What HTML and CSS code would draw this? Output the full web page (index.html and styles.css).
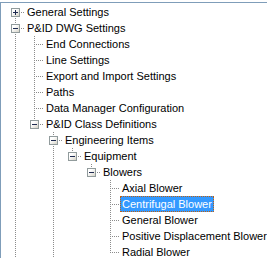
FILE: index.html
```html
<!DOCTYPE html>
<html lang="en">
<head>
    <meta charset="UTF-8">
    <title>Settings Tree</title>
    <link rel="stylesheet" href="styles.css">
</head>
<body>

    <div class="tree">
        <!-- root level -->
        <div class="row">
            <span class="cell first"><span class="box plus"></span></span>
            <span class="label">General Settings</span>
        </div>
        <div class="row">
            <span class="cell tee"><span class="box minus"></span></span>
            <span class="label">P&amp;ID DWG Settings</span>
        </div>

        <!-- P&ID DWG Settings children -->
        <div class="row">
            <span class="cell v"></span><span class="cell tee"></span>
            <span class="label">End Connections</span>
        </div>
        <div class="row">
            <span class="cell v"></span><span class="cell tee"></span>
            <span class="label">Line Settings</span>
        </div>
        <div class="row">
            <span class="cell v"></span><span class="cell tee"></span>
            <span class="label">Export and Import Settings</span>
        </div>
        <div class="row">
            <span class="cell v"></span><span class="cell tee"></span>
            <span class="label">Paths</span>
        </div>
        <div class="row">
            <span class="cell v"></span><span class="cell tee"></span>
            <span class="label">Data Manager Configuration</span>
        </div>
        <div class="row">
            <span class="cell v"></span><span class="cell elbow"><span class="box minus"></span></span>
            <span class="label">P&amp;ID Class Definitions</span>
        </div>

        <div class="row">
            <span class="cell v"></span><span class="cell"></span>
            <span class="cell tee"><span class="box minus"></span></span>
            <span class="label">Engineering Items</span>
        </div>
        <div class="row">
            <span class="cell v"></span><span class="cell"></span><span class="cell v"></span>
            <span class="cell elbow"><span class="box minus"></span></span>
            <span class="label">Equipment</span>
        </div>
        <div class="row">
            <span class="cell v"></span><span class="cell"></span><span class="cell v"></span><span class="cell"></span>
            <span class="cell elbow"><span class="box minus"></span></span>
            <span class="label">Blowers</span>
        </div>

        <!-- Blowers children -->
        <div class="row">
            <span class="cell v"></span><span class="cell"></span><span class="cell v"></span><span class="cell"></span><span class="cell"></span>
            <span class="cell tee"></span>
            <span class="label">Axial Blower</span>
        </div>
        <div class="row">
            <span class="cell v"></span><span class="cell"></span><span class="cell v"></span><span class="cell"></span><span class="cell"></span>
            <span class="cell tee"></span>
            <span class="label selected">Centrifugal Blower</span>
        </div>
        <div class="row">
            <span class="cell v"></span><span class="cell"></span><span class="cell v"></span><span class="cell"></span><span class="cell"></span>
            <span class="cell tee"></span>
            <span class="label">General Blower</span>
        </div>
        <div class="row">
            <span class="cell v"></span><span class="cell"></span><span class="cell v"></span><span class="cell"></span><span class="cell"></span>
            <span class="cell tee"></span>
            <span class="label">Positive Displacement Blower</span>
        </div>
        <div class="row">
            <span class="cell v"></span><span class="cell"></span><span class="cell v"></span><span class="cell"></span><span class="cell"></span>
            <span class="cell elbow"></span>
            <span class="label">Radial Blower</span>
        </div>
    </div>

</body>
</html>
```

FILE: styles.css
```css
body {
    margin: 0;
    background-color: #ffffff;
    font-family: "Liberation Sans", Arial, sans-serif;
    font-size: 11px;
    color: #000000;
    overflow: hidden;
    height: 258px;
}

.tree {
    margin-top: 2px;
    border-top: 1px solid #7f9db9;
    border-left: 1px solid #7f9db9;
    padding: 1px 0 0 5px; /* first connector column centred on x=15 */
    height: 254px;
    overflow: hidden;
}

.row {
    display: flex;
    height: 16px;
    white-space: nowrap;
}

/* one 19px indent column */
.cell {
    position: relative;
    flex: none;
    width: 19px;
    height: 16px;
    background-repeat: no-repeat;
}

/* full vertical dotted line */
.cell.v {
    background-image: repeating-linear-gradient(to bottom, #8c8c8c 0 1px, transparent 1px 2px);
    background-size: 1px 16px;
    background-position: 9px 0;
}

/* ├ connector */
.cell.tee {
    background-image:
        repeating-linear-gradient(to bottom, #8c8c8c 0 1px, transparent 1px 2px),
        repeating-linear-gradient(to right, #8c8c8c 0 1px, transparent 1px 2px);
    background-size: 1px 16px, 8px 1px;
    background-position: 9px 0, 11px 8px;
}

/* └ connector (last child) */
.cell.elbow {
    background-image:
        repeating-linear-gradient(to bottom, #8c8c8c 0 1px, transparent 1px 2px),
        repeating-linear-gradient(to right, #8c8c8c 0 1px, transparent 1px 2px);
    background-size: 1px 9px, 8px 1px;
    background-position: 9px 0, 11px 8px;
}

/* ┌ connector (first root) */
.cell.first {
    background-image:
        repeating-linear-gradient(to bottom, #8c8c8c 0 1px, transparent 1px 2px),
        repeating-linear-gradient(to right, #8c8c8c 0 1px, transparent 1px 2px);
    background-size: 1px 8px, 8px 1px;
    background-position: 9px 8px, 11px 8px;
}

/* expand / collapse button sits over the lines */
.box {
    position: absolute;
    left: 5px;
    top: 4px;
    width: 9px;
    height: 9px;
    box-sizing: border-box;
    border: 1px solid #919b9c;
    background: linear-gradient(135deg, #ffffff 30%, #d6d3c8);
}

.box::before,
.box::after {
    content: "";
    position: absolute;
    background-color: #1e2a50;
}

.box::before {
    left: 1px;
    top: 3px;
    width: 5px;
    height: 1px;
}

.box.plus::after {
    left: 3px;
    top: 1px;
    width: 1px;
    height: 5px;
}

.label {
    display: block;
    height: 14px;
    line-height: 14px;
    padding: 0 1px;
    border: 1px solid transparent;
}

.label.selected {
    background-color: #3399ff;
    color: #ffffff;
    border: 1px dotted #c06010;
}
```
